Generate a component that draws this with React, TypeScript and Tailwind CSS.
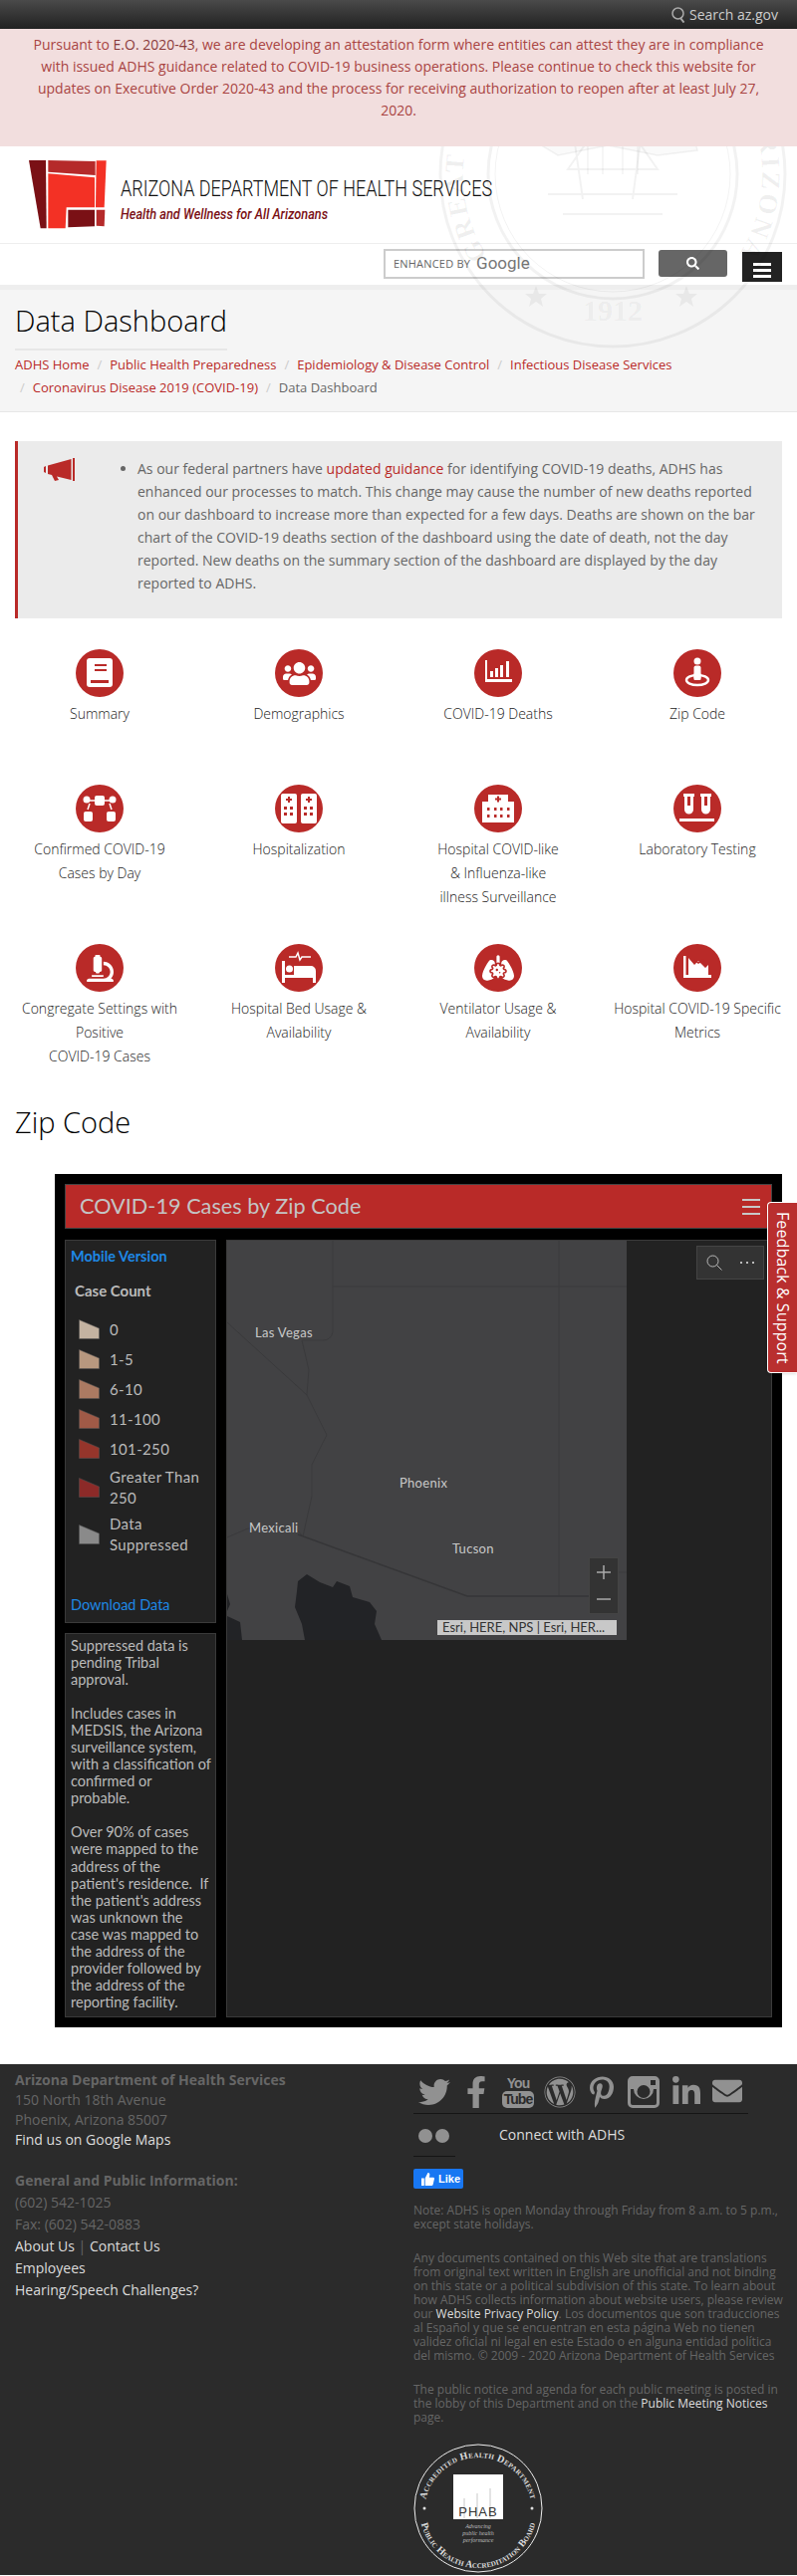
import React from 'react';
import { FaTwitter, FaFacebookF, FaWordpress, FaPinterestP, FaLinkedinIn, FaEnvelope, FaUsers, FaMicroscope, FaSearch } from 'react-icons/fa';
import { FaLungsVirus } from 'react-icons/fa6';

function Circle({ children }: { children: React.ReactNode }) {
  return (
    <div className="w-12 h-12 rounded-full bg-[#b92a28] mx-auto flex items-center justify-center text-white">
      {children}
    </div>
  );
}

function Svg48({ children }: { children: React.ReactNode }) {
  return (
    <svg viewBox="0 0 48 48" className="w-12 h-12" fill="white">
      {children}
    </svg>
  );
}

const icons: Record<string, React.ReactNode> = {
  summary: (
    <Svg48>
      <rect x="11" y="9" width="26" height="29" rx="3" />
      <path d="M19 15h12v2H19zM19 20h12v2H19zM15 31h18v3H15z" fill="#b92a28" />
    </Svg48>
  ),
  demographics: <FaUsers size={33} />,
  deaths: (
    <Svg48>
      <path d="M11 11h2v19h25v3H11z" />
      <path d="M16 22h3v6h-3zM21 19h3v9h-3zM26 16h3v12h-3zM32 12h3v16h-3z" />
    </Svg48>
  ),
  zip: (
    <Svg48>
      <circle cx="24" cy="12" r="3.5" />
      <rect x="20.5" y="16.5" width="7" height="14" rx="2" />
      <ellipse cx="24" cy="31" rx="11" ry="5" fill="none" stroke="white" strokeWidth="2.4" />
      <rect x="20.5" y="24" width="7" height="7" rx="1" />
    </Svg48>
  ),
  confirmed: (
    <Svg48>
      <rect x="19" y="11" width="10" height="10" rx="2" />
      <circle cx="11" cy="15" r="3.5" />
      <circle cx="37" cy="15" r="3.5" />
      <rect x="8" y="27" width="9" height="10" rx="2" />
      <rect x="31" y="27" width="9" height="10" rx="2" />
      <path d="M14 16h5M29 16h5M12 25l2-6M36 25l-2-6" stroke="white" strokeWidth="1.5" fill="none" />
    </Svg48>
  ),
  hospitalization: (
    <Svg48>
      <rect x="6" y="9" width="16" height="30" rx="2" />
      <rect x="26" y="9" width="16" height="30" rx="2" />
      <path d="M13 12h2v2h2v2h-2v2h-2v-2h-2v-2h2zM33 12h2v2h2v2h-2v2h-2v-2h-2v-2h2z" fill="#b92a28" />
      <path d="M9 22h3v3H9zM15 22h3v3h-3zM9 28h3v3H9zM15 28h3v3h-3zM29 22h3v3h-3zM35 22h3v3h-3zM29 28h3v3h-3zM35 28h3v3h-3z" fill="#b92a28" />
    </Svg48>
  ),
  hospital: (
    <Svg48>
      <path d="M14 10h20v7h6v21H8V17h6z" />
      <path d="M23 11.5h2v2h2v2h-2v2h-2v-2h-2v-2h2z" fill="#b92a28" />
      <path d="M13 23h2.500v3H13zM20 23h2.500v3H20zM26 23h2.500v3H26zM33 23h2.500v3H33zM13 30h2.500v3H13zM20 30h2.500v3H20zM26 30h2.500v3H26zM33 30h2.500v3H33z" fill="#b92a28" />
    </Svg48>
  ),
  lab: (
    <Svg48>
      <path d="M10 9h11v3h-1v13a4.500 4.500 0 0 1-9 0V12h-1zM27 9h11v3h-1v13a4.500 4.500 0 0 1-9 0V12h-1z" />
      <path d="M14 12h3v9h-3zM31 12h3v9h-3z" fill="#b92a28" />
      <rect x="6" y="34" width="35" height="3" />
    </Svg48>
  ),
  congregate: <FaMicroscope size={27} />,
  bed: (
    <Svg48>
      <path d="M14 13h7l2-4 2 7 2-3h9" fill="none" stroke="white" strokeWidth="1.5" />
      <rect x="7" y="17" width="3" height="22" />
      <circle cx="14.500" cy="25" r="3.500" />
      <path d="M19 22h17a5 5 0 0 1 5 5v12h-3v-5H10v-3h9z" />
    </Svg48>
  ),
  lungs: <FaLungsVirus size={32} />,
  metrics: (
    <Svg48>
      <path d="M10 12h2.500v19H38v3H10z" />
      <path d="M15 14l6 7 4-4 7 7 3-3v11H15z" />
      <path d="M21 16l4 3 5-3 3 6" fill="none" stroke="#b92a28" strokeWidth="1.500" />
    </Svg48>
  ),
};

const dashLinks = [
  { key: 'summary', text: ['Summary'] },
  { key: 'demographics', text: ['Demographics'] },
  { key: 'deaths', text: ['COVID-19 Deaths'] },
  { key: 'zip', text: ['Zip Code'] },
  { key: 'confirmed', text: ['Confirmed COVID-19', 'Cases by Day'] },
  { key: 'hospitalization', text: ['Hospitalization'] },
  { key: 'hospital', text: ['Hospital COVID-like', '& Influenza-like', 'illness Surveillance'] },
  { key: 'lab', text: ['Laboratory Testing'] },
  { key: 'congregate', text: ['Congregate Settings with', 'Positive', 'COVID-19 Cases'] },
  { key: 'bed', text: ['Hospital Bed Usage &', 'Availability'] },
  { key: 'lungs', text: ['Ventilator Usage &', 'Availability'] },
  { key: 'metrics', text: ['Hospital COVID-19 Specific', 'Metrics'] },
];

const legend = [
  { color: '#c4b3a1', label: ['0'] },
  { color: '#b8987f', label: ['1-5'] },
  { color: '#ab7a62', label: ['6-10'] },
  { color: '#a05a47', label: ['11-100'] },
  { color: '#95352b', label: ['101-250'] },
  { color: '#8c2a28', label: ['Greater Than', '250'] },
  { color: '#8a8a8a', label: ['Data', 'Suppressed'] },
];

function Seal() {
  return (
    <svg viewBox="0 0 350 350" className="absolute left-[440px] top-[-147px] w-[350px] h-[350px] pointer-events-none" fill="none" stroke="#000" strokeOpacity="0.05">
      <defs>
        <path id="sealText" d="M69 281A150 150 0 1 1 281 281" />
      </defs>
      <circle cx="175" cy="175" r="173" strokeWidth="3" />
      <circle cx="175" cy="175" r="125" strokeWidth="3" />
      <circle cx="175" cy="175" r="118" strokeWidth="1" />
      <text fontFamily="'Liberation Serif', serif" fontSize="27" fontWeight="700" fill="#000" fillOpacity="0.06" stroke="none" letterSpacing="3">
        <textPath href="#sealText" startOffset="50%" textAnchor="middle">GREAT SEAL OF THE STATE OF ARIZONA</textPath>
      </text>
      <path d="M95 105l30-25 35 15 30-18 30 14 30 20 10 40-40 5-50-10-50 10-25-15z" fill="#000" fillOpacity="0.02" strokeWidth="1.500" />
      <path d="M130 170l45-65 45 65zM135 130l10 70M205 125l-10 75M110 195h130M125 215h100" strokeWidth="2" />
      <path d="M150 135v40M165 125v50M185 125v50M200 135v40" strokeWidth="1.500" />
      <text x="175" y="322" textAnchor="middle" fontFamily="'Liberation Serif', serif" fontSize="30" fontWeight="700" fill="#000" fillOpacity="0.05" stroke="none">1912</text>
      <path d="M98 287l3 8 8 0-6 5 2 8-7-5-7 5 2-8-6-5 8 0zM249 287l3 8 8 0-6 5 2 8-7-5-7 5 2-8-6-5 8 0z" fill="#000" fillOpacity="0.05" stroke="none" />
    </svg>
  );
}

function Logo() {
  return (
    <svg viewBox="87 63 234 207" className="w-[78px] h-[69px] shrink-0">
      <polygon points="87,63 138,63 140,268 122,268" fill="#7a1015" />
      <polygon points="145,63 287,66 287,108 145,98" fill="#b52a2a" />
      <polygon points="290,64 320,64 314,205 288,205" fill="#f33125" />
      <polygon points="145,103 285,115 285,205 200,205 197,268 145,268" fill="#f33125" />
      <polygon points="205,212 285,212 285,262 205,265" fill="#7a1015" />
      <polygon points="290,212 316,212 314,262 290,260" fill="#b52a2a" />
    </svg>
  );
}

function MapCanvas() {
  return (
    <div className="relative w-[401px] h-[401px] bg-[#424244] overflow-hidden font-['Lato',sans-serif]">
      <svg viewBox="0 0 401 401" className="absolute inset-0 w-full h-full" fill="none" stroke="#3a3a3c">
        <path d="M106 0V92q-2 8-10 8H75l7 30-2 25 20 40-15 30v32l-9 40-7-8-48 0-21 9" />
        <path d="M106 46H401M333 0V357M393 333H401M0 82L80 155" />
        <path d="M71 295L241 357H363" strokeWidth="1.500" stroke="#363638" />
        <path d="M78 401L75 385 68 368 70 352 71 342 80 335 93 343 106 348 110 342 123 347 126 358 143 363 150 372 148 385 155 401Z" fill="#222326" stroke="none" />
        <path d="M0 377L13 383 15 401H0ZM0 355L3 365 0 372Z" fill="#222326" stroke="none" />
      </svg>
      <span className="absolute left-[28px] top-[83px] text-[13px] tracking-[0.3px] leading-[18px] text-[#c9c9c9]">Las Vegas</span>
      <span className="absolute left-[173px] top-[234px] text-[13px] tracking-[0.3px] leading-[18px] text-[#c9c9c9]">Phoenix</span>
      <span className="absolute left-[22px] top-[279px] text-[13px] tracking-[0.3px] leading-[18px] text-[#c9c9c9]">Mexicali</span>
      <span className="absolute left-[226px] top-[300px] text-[13px] tracking-[0.3px] leading-[18px] text-[#c9c9c9]">Tucson</span>
      <div className="absolute left-[363px] top-[318px] w-[30px] h-[57px] bg-[#333] border border-[#444] flex flex-col items-center justify-around text-[#aaa]">
        <svg viewBox="0 0 14 14" className="w-[14px] h-[14px]" stroke="currentColor" strokeWidth="1.500"><path d="M7 0v14M0 7h14" /></svg>
        <svg viewBox="0 0 14 14" className="w-[14px] h-[14px]" stroke="currentColor" strokeWidth="1.500"><path d="M0 7h14" /></svg>
      </div>
      <div className="absolute left-[211px] top-[381px] w-[180px] h-[15px] bg-[#c8c8c8] text-[#333] text-[13px] leading-[15px] pl-[5px] whitespace-nowrap">Esri, HERE, NPS | Esri, HER...</div>
    </div>
  );
}

function Dashboard() {
  return (
    <div className="ml-[55px] w-[730px] bg-black p-[10px] font-['Lato',sans-serif]">
      <div className="h-[45px] bg-[#b92a28] border border-[#444] flex items-center justify-between pl-[14px] pr-[11px]">
        <span className="text-[21.700px] text-[#c4c4c4] whitespace-nowrap">COVID-19 Cases by Zip Code</span>
        <div className="w-[18px] flex flex-col gap-[5px]">
          <div className="h-[2px] bg-[#c8c8c8]" />
          <div className="h-[2px] bg-[#c8c8c8]" />
          <div className="h-[2px] bg-[#c8c8c8]" />
        </div>
      </div>
      <div className="mt-[11px] flex gap-[10px]">
        <div className="w-[152px] flex flex-col gap-[10px]">
          <div className="h-[385px] bg-[#222] border border-[#3a3a3a] flex flex-col text-[#bbb]">
            <div className="pl-[5px] pt-[6px] text-[14.500px] font-bold leading-[20px] text-[#1e88e5]">Mobile Version</div>
            <div className="pl-[9px] mt-[14px] text-[15px] font-bold leading-[20px]">Case Count</div>
            <div className="mt-[14px] flex flex-col">
              {legend.map((item) => (
                <div key={item.label[0]} className="flex items-center min-h-[30px] pl-[13px] py-[2.500px]">
                  <svg viewBox="0 0 21 20" className="w-[21px] h-[20px] shrink-0">
                    <polygon points="0.500,0.500 20.500,9 20.500,19.500 0.500,19.500" fill={item.color} stroke="#555" strokeWidth="0.500" />
                  </svg>
                  <div className="ml-[10px] text-[15px] leading-[21px] tracking-[0.35px]">
                    {item.label.map((l) => (
                      <div key={l}>{l}</div>
                    ))}
                  </div>
                </div>
              ))}
            </div>
            <div className="mt-auto pb-[7px] pl-[5px] text-[14.500px] leading-[20px] text-[#1e88e5]">Download Data</div>
          </div>
          <div className="h-[386px] bg-[#222] border border-[#3a3a3a] pl-[5px] pr-[3px] pt-[3px] text-[14.500px] leading-[17.050px] text-[#bbb]">
            <p>Suppressed data is pending Tribal approval.</p>
            <p className="mt-[17px]">Includes cases in MEDSIS, the Arizona surveillance system, with a classification of confirmed or probable.</p>
            <p className="mt-[17px]">Over 90% of cases were mapped to the address of the patient's residence.&nbsp; If the patient's address was unknown the case was mapped to the address of the provider followed by the address of the reporting facility.</p>
          </div>
        </div>
        <div className="relative w-[548px] h-[781px] bg-[#222] border border-[#3a3a3a]">
          <MapCanvas />
          <div className="absolute left-[471px] top-[5px] w-[68px] h-[34px] bg-[#333] border border-[#444] flex items-center justify-around text-[#bbb]">
            <svg viewBox="0 0 16 16" className="w-[16px] h-[16px]" fill="none" stroke="currentColor" strokeWidth="1">
              <circle cx="6.500" cy="6.500" r="5.500" />
              <path d="M10.500 10.500L15.500 15.500" />
            </svg>
            <div className="flex gap-[4px]">
              <div className="w-[2px] h-[2px] bg-[#bbb]" />
              <div className="w-[2px] h-[2px] bg-[#bbb]" />
              <div className="w-[2px] h-[2px] bg-[#bbb]" />
            </div>
          </div>
        </div>
      </div>
    </div>
  );
}

function InstagramOld() {
  return (
    <svg viewBox="0 0 32 32" className="w-[32px] h-[32px]" fill="#919191">
      <path fillRule="evenodd" d="M5 0h22a5 5 0 0 1 5 5v22a5 5 0 0 1-5 5H5a5 5 0 0 1-5-5V5a5 5 0 0 1 5-5zM3 13v14a2 2 0 0 0 2 2h22a2 2 0 0 0 2-2V13h-3a10 10 0 1 1-20 0zM16 9a6.500 6.500 0 1 0 0 13 6.500 6.500 0 0 0 0-13zM23 4v5h5V4z" />
    </svg>
  );
}

function Youtube() {
  return (
    <div className="w-[32px] h-[32px] flex flex-col items-center font-['Liberation_Sans',sans-serif] font-bold text-[#919191]">
      <div className="text-[14px] leading-[14px] tracking-[-1px]">You</div>
      <div className="w-[32px] h-[17px] mt-[1px] bg-[#919191] rounded-[5px] text-[#2b2b2b] text-[14px] leading-[17px] text-center tracking-[-1px]">Tube</div>
    </div>
  );
}

function Phab() {
  return (
    <svg viewBox="0 0 130 130" className="w-[130px] h-[130px] block">
      <defs>
        <path id="phabTop" d="M11 68a54 54 0 0 1 108 0" />
        <path id="phabBottom" d="M6 66a59 59 0 0 0 118 0" />
      </defs>
      <circle cx="65" cy="65" r="64" fill="#2b2b2b" stroke="#eee" strokeWidth="1" />
      <text fontFamily="'Liberation Serif', serif" fontSize="10" fontWeight="700" fill="#ddd" letterSpacing="0.300" style={{ fontVariant: 'small-caps' }}>
        <textPath href="#phabTop" startOffset="50%" textAnchor="middle">Accredited Health Department</textPath>
      </text>
      <text fontFamily="'Liberation Serif', serif" fontSize="10" fontWeight="700" fill="#ddd" style={{ fontVariant: 'small-caps' }}>
        <textPath href="#phabBottom" startOffset="50%" textAnchor="middle">Public Health Accreditation Board</textPath>
      </text>
      <circle cx="11" cy="65" r="1.500" fill="#ddd" />
      <circle cx="119" cy="65" r="1.500" fill="#ddd" />
      <rect x="40" y="31" width="50" height="45" fill="#fff" />
      <path d="M51 55v20M64 50v25M77 45v30" stroke="#bbb" strokeWidth="0.800" />
      <text x="65" y="73" textAnchor="middle" fontFamily="'Liberation Sans', sans-serif" fontSize="13" fill="#333" letterSpacing="1">PHAB</text>
      <g fontFamily="'Liberation Serif', serif" fontSize="6" fontStyle="italic" fill="#bbb" textAnchor="middle">
        <text x="65" y="85">Advancing</text>
        <text x="65" y="92">public health</text>
        <text x="65" y="99">performance</text>
      </g>
    </svg>
  );
}

export default function App() {
  return (
    <div className="relative w-[800px] h-[2587px] overflow-hidden bg-white font-['Open_Sans',sans-serif] text-[14px]">
      {/* az.gov bar */}
      <div className="h-[29px] bg-gradient-to-b from-[#4a4a4a] to-[#222] flex items-center justify-end pr-[19px] gap-[4px] text-[#ccc]">
        <svg viewBox="0 0 14 16" className="w-[14px] h-[16px]" fill="none" stroke="#aaa" strokeWidth="1.500">
          <ellipse cx="6.500" cy="6.500" rx="5.500" ry="5.500" />
          <path d="M9 11l3.500 4.500" strokeWidth="2" />
        </svg>
        <span>Search az.gov</span>
      </div>

      {/* alert */}
      <div className="h-[118px] bg-[#f2dede] px-[30px] pt-[5px] text-center leading-[22px] text-[#a94442]">
        Pursuant to <span className="text-[#8a3a3a]">E.O. 2020-43</span>, we are developing an attestation form where entities can attest they are in compliance with issued ADHS guidance related to COVID-19 business operations. Please continue to check this website for updates on Executive Order 2020-43 and the process for receiving authorization to reopen after at least July 27, 2020.
      </div>

      <div className="relative overflow-hidden">
        {/* logo row */}
        <div className="h-[97px] pt-[14px] pl-[29px] flex items-start gap-[14px]">
          <Logo />
          <div className="pt-[14px]">
            <div className="text-[22.500px] leading-[28px] text-[#111] font-['Roboto',sans-serif] font-light scale-x-[0.8] origin-left whitespace-nowrap">ARIZONA DEPARTMENT OF HEALTH SERVICES</div>
            <div className="mt-[2px] text-[14px] leading-[20px] italic font-medium text-[#7a1015] font-['Roboto',sans-serif] scale-x-[0.91] origin-left whitespace-nowrap">Health and Wellness for All Arizonans</div>
          </div>
        </div>

        {/* search row */}
        <div className="h-[42px] border-t border-[#eee] flex items-start pl-[385px] pt-[5px]">
          <div className="w-[262px] h-[30px] border-2 border-[#ccc] bg-white flex items-center pl-[8px] gap-[6px]">
            <span className="text-[11px] tracking-[0.2px] text-[#666]">ENHANCED BY</span>
            <span className="text-[17px] font-['Roboto',sans-serif] text-[#777]">Google</span>
          </div>
          <div className="ml-[14px] w-[69px] h-[27px] mt-[1px] bg-[#666] rounded-[3px] flex items-center justify-center text-white">
            <FaSearch size={13} />
          </div>
          <div className="ml-[15px] w-[40px] h-[30px] mt-[3px] bg-[#222] flex flex-col items-center justify-center gap-[3px] pt-[6px]">
            <div className="w-[18px] h-[3px] bg-white" />
            <div className="w-[18px] h-[3px] bg-white" />
            <div className="w-[18px] h-[3px] bg-white" />
          </div>
        </div>

        {/* title band */}
        <div className="h-[128px] bg-[#f5f5f5] border-t-[5px] border-b border-t-[#eeeeee] border-b-[#e7e7e7] px-[15px] pt-[11px]">
          <h1 className="w-fit text-[29px] leading-[40px] font-light text-black border-b-2 border-[#e7e7e7] pb-[8px]">Data Dashboard</h1>
          <div className="mt-[3px] text-[13px] leading-[23px] text-[#666]">
            <div className="whitespace-nowrap">
              <a className="text-[#b92a28]">ADHS Home</a>
              <span className="px-[8px] text-[#ccc]">/</span>
              <a className="text-[#b92a28]">Public Health Preparedness</a>
              <span className="px-[8px] text-[#ccc]">/</span>
              <a className="text-[#b92a28]">Epidemiology &amp; Disease Control</a>
              <span className="px-[8px] text-[#ccc]">/</span>
              <a className="text-[#b92a28]">Infectious Disease Services</a>
            </div>
            <div className="whitespace-nowrap pl-[5px]">
              <span className="pr-[8px] text-[#ccc]">/</span>
              <a className="text-[#b92a28]">Coronavirus Disease 2019 (COVID-19)</a>
              <span className="px-[8px] text-[#ccc]">/</span>
              <span>Data Dashboard</span>
            </div>
          </div>
        </div>
        <Seal />
      </div>

      {/* notice */}
      <div className="mt-[29px] mx-[15px] h-[178px] bg-[#ebebeb] border-l-[3px] border-[#b92a28] flex pt-[16px]">
        <svg viewBox="0 0 31 23" className="ml-[26px] w-[31px] h-[23px] shrink-0 mt-[1px]" fill="#b92a28">
          <path d="M29 0h2v23h-2zM4 7.500L27.500 1v21L13 18.500l2 3.500-4 1-3-6-4-1zM0 9l2-1v7l-2-1z" />
        </svg>
        <ul className="ml-[39px] pl-[24px] pr-[22px] list-disc leading-[23px] text-[#666] marker:text-[#666]">
          <li>
            As our federal partners have <a className="text-[#b92a28]">updated guidance</a> for identifying COVID-19 deaths, ADHS has enhanced our processes to match. This change may cause the number of new deaths reported on our dashboard to increase more than expected for a few days. Deaths are shown on the bar chart of the COVID-19 deaths section of the dashboard using the date of death, not the day reported. New deaths on the summary section of the dashboard are displayed by the day reported to ADHS.
          </li>
        </ul>
      </div>

      {/* dashboard links */}
      <div className="mt-[31px] grid grid-cols-4 text-center leading-[24px] font-light text-[#222]">
        {dashLinks.map((d, i) => (
          <div key={d.key} className={i < 4 ? 'px-[15px] h-[136px]' : i < 8 ? 'px-[15px] h-[160px]' : 'px-[15px] h-[125px]'}>
            <Circle>{icons[d.key]}</Circle>
            <div className="mt-[5px] whitespace-nowrap">
              {d.text.map((t) => (
                <div key={t}>{t}</div>
              ))}
            </div>
          </div>
        ))}
      </div>

      <h2 className="mt-[37px] ml-[15px] text-[29px] leading-[34px] font-light text-black">Zip Code</h2>
      <div className="mt-[35px]">
        <Dashboard />
      </div>

      {/* footer */}
      <footer className="mt-[37px] h-[513px] bg-[#2b2b2b] flex text-[#666]">
        <div className="w-[400px] pl-[15px] pt-[6px]">
          <div className="font-bold leading-[20px]">Arizona Department of Health Services</div>
          <div className="leading-[20px]">150 North 18th Avenue</div>
          <div className="leading-[20px]">Phoenix, Arizona 85007</div>
          <div className="leading-[20px] text-[#ddd]">Find us on Google Maps</div>
          <div className="mt-[20px] font-bold leading-[22px]">General and Public Information:</div>
          <div className="leading-[22px]">(602) 542-1025</div>
          <div className="leading-[22px]">Fax: (602) 542-0883</div>
          <div className="leading-[22px] text-[#ddd]">
            About Us <span className="text-[#666]">|</span> Contact Us
          </div>
          <div className="leading-[22px] text-[#ddd]">Employees</div>
          <div className="leading-[22px] text-[#ddd]">Hearing/Speech Challenges?</div>
        </div>
        <div className="w-[376px] ml-[15px] pt-[12px] text-[12px] leading-[14px]">
          <div className="h-[38px] w-[336px] border-b border-[#151515] flex items-start pl-[5px] text-[#919191]">
            <FaTwitter size={32} />
            <FaFacebookF size={32} className="ml-[10px]" />
            <div className="ml-[10px]"><Youtube /></div>
            <FaWordpress size={32} className="ml-[10px]" />
            <FaPinterestP size={32} className="ml-[10px]" />
            <div className="ml-[10px]"><InstagramOld /></div>
            <FaLinkedinIn size={32} className="ml-[11px]" />
            <FaEnvelope size={30} className="ml-[10px]" />
          </div>
          <div className="h-[43px] w-[42px] border-b border-[#151515] relative">
            <div className="absolute left-[5px] top-[15px] flex gap-[3px]">
              <div className="w-[14px] h-[14px] rounded-full bg-[#919191]" />
              <div className="w-[14px] h-[14px] rounded-full bg-[#919191]" />
            </div>
            <div className="absolute left-[86px] top-[11px] text-[14px] leading-[20px] text-[#ddd] whitespace-nowrap">Connect with ADHS</div>
          </div>
          <div className="mt-[12px] w-[50px] h-[20px] bg-[#1877f2] rounded-[2px] flex items-center pl-[8px] gap-[4px] text-white font-['Liberation_Sans',sans-serif] font-bold text-[11px]">
            <svg viewBox="0 0 14 14" className="w-[13px] h-[13px]" fill="white"><path d="M0 6h3v8H0zM4 6l3-6c1.500 0 2 1 2 2l-.500 3H13c1 0 1 1 1 1.500L12.500 13c-.2.700-.7 1-1.500 1H4z" /></svg>
            Like
          </div>
          <p className="mt-[15px]">Note: ADHS is open Monday through Friday from 8 a.m. to 5 p.m., except state holidays.</p>
          <p className="mt-[20px]">
            Any documents contained on this Web site that are translations from original text written in English are unofficial and not binding on this state or a political subdivision of this state. To learn about how ADHS collects information about website users, please review our <a className="text-[#ddd]">Website Privacy Policy</a>. Los documentos que son traducciones al Español y que se encuentran en esta página Web no tienen validez oficial ni legal en este Estado o en alguna entidad política del mismo. © 2009 - 2020 Arizona Department of Health Services
          </p>
          <p className="mt-[20px]">
            The public notice and agenda for each public meeting is posted in the lobby of this Department and on the <a className="text-[#ddd]">Public Meeting Notices</a> page.
          </p>
          <div className="mt-[19px]">
            <Phab />
          </div>
        </div>
      </footer>

      {/* feedback tab */}
      <div className="absolute right-0 top-[1207px] w-[30px] h-[172px] bg-[#b92f2f] border border-r-0 border-white rounded-l-[4px] shadow flex items-center justify-center text-white text-[16.200px] [writing-mode:vertical-rl] whitespace-nowrap">
        Feedback &amp; Support
      </div>
    </div>
  );
}
